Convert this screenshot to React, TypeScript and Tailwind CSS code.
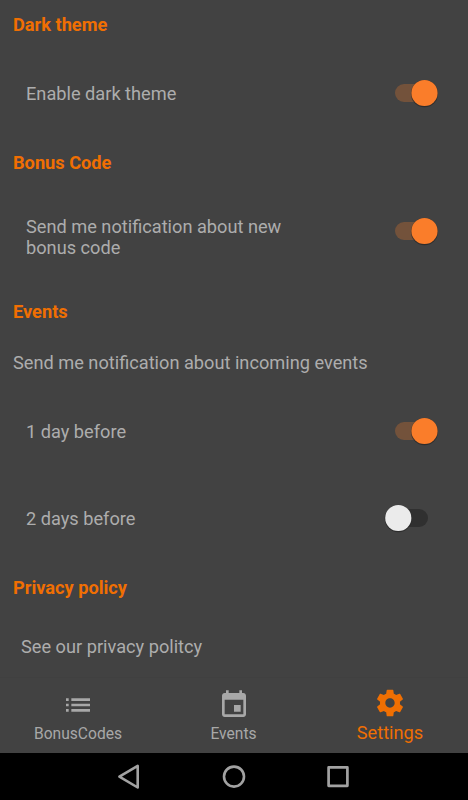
import type { ReactNode } from 'react';

function Heading({ children }: { children: ReactNode }) {
  return (
    <h2 className="flex h-[50px] shrink-0 items-center pb-px pl-[13px] font-bold text-[#f06f02]">
      {children}
    </h2>
  );
}

function Toggle({ on }: { on: boolean }) {
  const x = on ? 54.5 : 28.3;

  return (
    <svg width="68" height="36" viewBox="0 0 68 36" className="shrink-0">
      {on ? (
        <rect x="25" y="9" width="36" height="18" rx="9" fill="#73523b" />
      ) : (
        <rect x="22" y="9" width="36" height="18" rx="9" fill="#303030" />
      )}
      <circle cx={x} cy="18.7" r="13.6" fill="#222" opacity="0.65" />
      <circle cx={x} cy="18" r="13.1" fill={on ? '#fa7d2a' : '#ebebeb'} />
    </svg>
  );
}

function SettingRow({ label, on, className }: { label: string; on: boolean; className: string }) {
  return (
    <div className={`flex shrink-0 justify-between pr-[30px] pl-[26px] ${className}`}>
      <span className="w-[275px]">{label}</span>
      <div className="-mt-2">
        <Toggle on={on} />
      </div>
    </div>
  );
}

export default function App() {
  return (
    <div className="flex h-[800px] w-[468px] flex-col overflow-hidden bg-[#424242] font-['Roboto',sans-serif] text-[18.22px] leading-[21px] text-[#adadad]">
      <main className="flex min-h-0 flex-1 flex-col overflow-hidden">
        <Heading>Dark theme</Heading>
        <SettingRow label="Enable dark theme" on className="h-[88px] items-start pt-[33px]" />

        <Heading>Bonus Code</Heading>
        <SettingRow
          label="Send me notification about new bonus code"
          on
          className="h-[99px] items-start pt-[28px] *:last:-mt-[3px]"
        />

        <Heading>Events</Heading>
        <p className="flex h-[51px] shrink-0 items-center pl-[13px]">
          Send me notification about incoming events
        </p>
        <SettingRow label="1 day before" on className="h-[87px] items-start pt-[33px]" />
        <SettingRow label="2 days before" on={false} className="h-[88px] items-start pt-[33px]" />

        <Heading>Privacy policy</Heading>
        <p className="pt-[23px] pl-[21px]">See our privacy politcy</p>
      </main>

      {/* Bottom tabs */}
      <nav className="grid h-[76px] shrink-0 grid-cols-3 border-t border-[#404040] text-[15.6px] leading-5 text-[#a8a8a8]">
        <div className="flex flex-col items-center pt-[11px]">
          <svg width="32" height="32" viewBox="0 0 24 24" fill="currentColor">
            <path d="M3 13h2v-2H3v2zm0 4h2v-2H3v2zm0-8h2V7H3v2zm4 4h14v-2H7v2zm0 4h14v-2H7v2zM7 7v2h14V7H7z" />
          </svg>
          <span className="mt-[3px]">BonusCodes</span>
        </div>
        <div className="flex flex-col items-center pt-[11px]">
          <svg width="32" height="32" viewBox="0 0 24 24" fill="currentColor">
            <path d="M17 12h-5v5h5v-5zM16 1v2H8V1H6v2H5c-1.11 0-1.99.9-1.99 2L3 19c0 1.1.89 2 2 2h14c1.1 0 2-.9 2-2V5c0-1.1-.9-2-2-2h-1V1h-2zm3 18H5V8h14v11z" />
          </svg>
          <span className="mt-[3px] pr-px">Events</span>
        </div>
        <div className="flex flex-col items-center pt-[9px] text-[18.2px] text-[#f06f02]">
          <svg width="32" height="32" viewBox="0 0 24 24" fill="currentColor">
            <path d="M19.43 12.98c.04-.32.07-.64.07-.98s-.03-.66-.07-.98l2.11-1.65c.19-.15.24-.42.12-.64l-2-3.46c-.12-.22-.39-.3-.61-.22l-2.49 1c-.52-.4-1.08-.73-1.69-.98l-.38-2.65C14.46 2.18 14.25 2 14 2h-4c-.25 0-.46.18-.49.42l-.38 2.65c-.61.25-1.17.59-1.69.98l-2.49-1c-.23-.09-.49 0-.61.22l-2 3.46c-.13.22-.07.49.12.64l2.11 1.65c-.04.32-.07.65-.07.98s.03.66.07.98l-2.11 1.65c-.19.15-.24.42-.12.64l2 3.46c.12.22.39.3.61.22l2.49-1c.52.4 1.08.73 1.69.98l.38 2.65c.03.24.24.42.49.42h4c.25 0 .46-.18.49-.42l.38-2.65c.61-.25 1.17-.59 1.69-.98l2.49 1c.23.09.49 0 .61-.22l2-3.46c.12-.22.07-.49-.12-.64l-2.11-1.65zM12 15.5c-1.93 0-3.5-1.57-3.5-3.5s1.57-3.5 3.5-3.5 3.5 1.57 3.5 3.5-1.57 3.5-3.5 3.5z" />
          </svg>
          <span className="mt-[4px]">Settings</span>
        </div>
      </nav>

      {/* Android system buttons */}
      <footer className="flex h-[47px] shrink-0 items-center justify-center gap-[72px] bg-black text-[#a2a2a2]">
        <svg width="32" height="32" viewBox="0 0 32 32" fill="none" stroke="currentColor" strokeWidth="2.6" strokeLinejoin="round">
          <path d="M23.7 4.9v21.6L5.4 15.7z" />
        </svg>
        <svg width="32" height="32" viewBox="0 0 32 32" fill="none" stroke="currentColor" strokeWidth="2.6">
          <circle cx="16" cy="15.6" r="10" />
        </svg>
        <svg width="32" height="32" viewBox="0 0 32 32" fill="none" stroke="currentColor" strokeWidth="2.7" strokeLinejoin="round">
          <rect x="6.6" y="6.4" width="18.8" height="18.4" />
        </svg>
      </footer>
    </div>
  );
}
